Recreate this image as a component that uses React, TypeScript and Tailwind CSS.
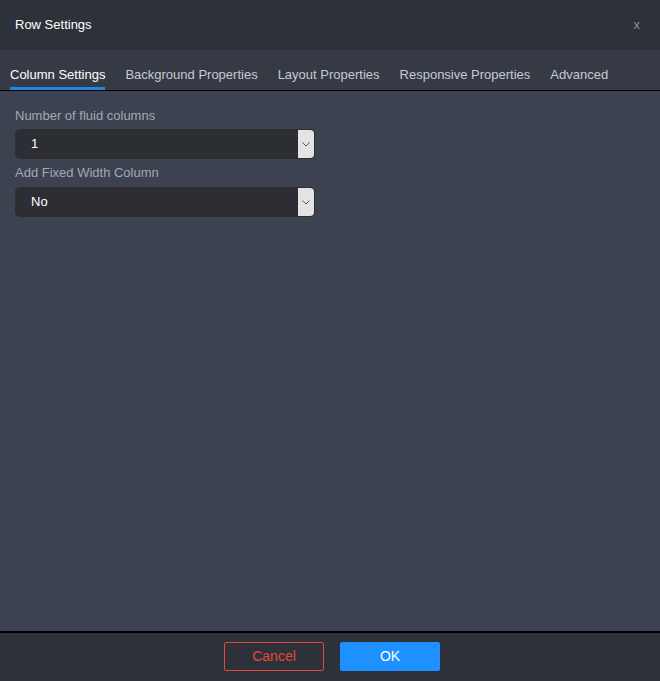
import React from "react";

const tabs = ["Column Settings", "Background Properties", "Layout Properties", "Responsive Properties", "Advanced"];

function SelectBox({ value }: { value: string }) {
  return (
    <div className="flex h-[30px] w-[300px] items-stretch rounded-[5px] bg-[#2c2e34]">
      <div className="flex flex-1 items-center pl-4 text-[13px] text-white">{value}</div>
      <div className="my-[1px] mr-[1px] flex w-[16px] items-center justify-center rounded-r-[4px] bg-[#e3e3e3]">
        <svg width="8" height="5" viewBox="0 0 8 5" fill="none">
          <path d="M0.5 0.5 L4 4 L7.5 0.5" stroke="#555" strokeWidth="1" />
        </svg>
      </div>
    </div>
  );
}

export default function App() {
  return (
    <div className="flex h-[681px] w-[660px] flex-col bg-[#3c4250] font-['Liberation_Sans',Arial,sans-serif]">
      <div className="flex h-[50px] items-center justify-between bg-[#2d3139] pl-[15px] pr-[20px]">
        <span className="text-[13px] text-white">Row Settings</span>
        <span className="text-[13px] text-[#8a909c]">x</span>
      </div>

      <div className="flex h-[41px] items-end gap-5 border-b border-black bg-[#353a45] px-[10px]">
        {tabs.map((t, i) => (
          <div
            key={t}
            className={
              i === 0
                ? "border-b-[3px] border-[#1e88e5] pb-[3px] text-[13px] text-white"
                : "border-b-[3px] border-transparent pb-[3px] text-[13px] text-[#c5cad3]"
            }
          >
            {t}
          </div>
        ))}
      </div>

      <div className="flex flex-1 flex-col px-[15px] pt-[17px]">
        <label className="text-[13px] leading-[15px] text-[#a3a9b3]">Number of fluid columns</label>
        <div className="mt-[6px]">
          <SelectBox value="1" />
        </div>
        <label className="mt-[6px] text-[13px] leading-[15px] text-[#a3a9b3]">Add Fixed Width Column</label>
        <div className="mt-[7px]">
          <SelectBox value="No" />
        </div>
      </div>

      <div className="flex h-[50px] items-center justify-center gap-4 border-t-2 border-black bg-[#2d3139] pb-[1px] pl-[4px]">
        <button className="h-[29px] w-[100px] rounded-[2px] border border-[#e2483c] text-[14px] text-[#e2483c]">Cancel</button>
        <button className="h-[29px] w-[100px] rounded-[2px] bg-[#1e90ff] text-[14px] text-white">OK</button>
      </div>
    </div>
  );
}
